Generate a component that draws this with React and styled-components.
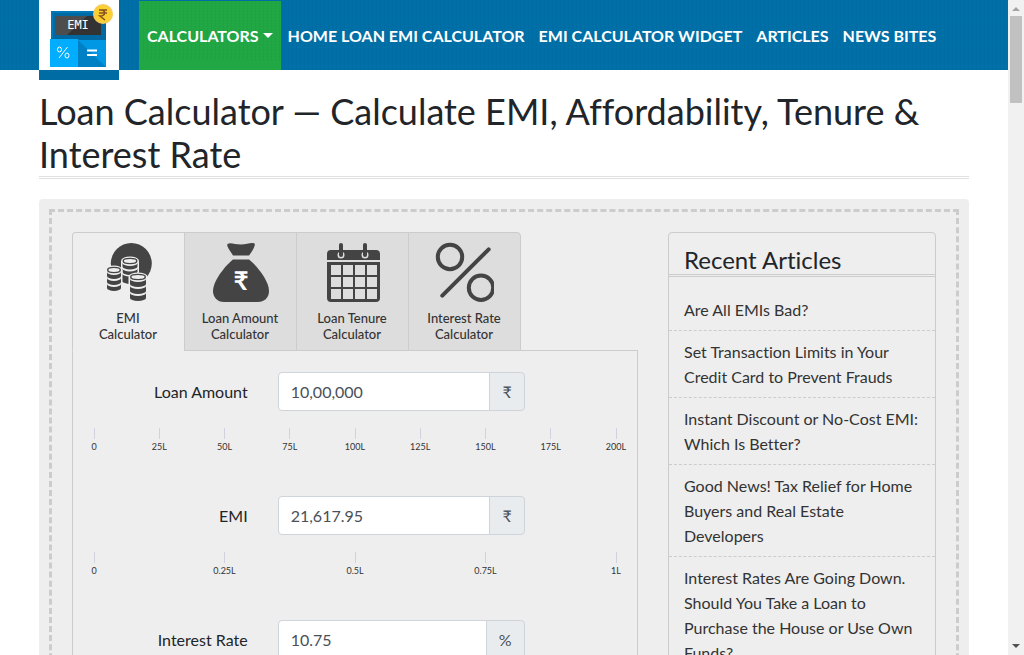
import React, { useState } from "react";
import styled, { createGlobalStyle, css } from "styled-components";

const GlobalStyle = createGlobalStyle`
  *, *::before, *::after { box-sizing: border-box; }
  body {
    margin: 0;
    background: #fff;
    color: #212529;
    font-family: Lato, "Noto Sans", sans-serif;
    font-size: 16px;
    font-variant-ligatures: none;
    line-height: 24px;
  }
  h1, h2, ul { margin: 0; padding: 0; font-weight: 400; }
  ul { list-style: none; }
  button, input { font: inherit; color: inherit; }
  a { color: inherit; text-decoration: none; }
`;

const weave = css`
  background-image:
    repeating-linear-gradient(90deg, rgba(0, 0, 0, 0.03) 0 1px, transparent 1px 4px),
    repeating-linear-gradient(0deg, rgba(0, 0, 0, 0.01) 0 1px, transparent 1px 3px);
`;

const Window = styled.div`
  display: flex;
  height: 100vh;
  overflow: hidden;
`;

const Page = styled.div`
  flex: 1;
  min-width: 0;
  overflow: hidden auto;
  scrollbar-width: none;
`;

const Container = styled.div`
  max-width: 960px;
  margin: 0 auto;
  padding: 0 15px;
`;

const Header = styled.header`
  height: 70px;
  background-color: #0070a9;
  ${weave}
`;

const HeaderInner = styled(Container)`
  display: flex;
  align-items: flex-start;
  gap: 20px;
`;

const LogoLink = styled.a`
  flex: none;
  width: 80px;
  height: 80px;
  background: #fff;
  border-bottom: 10px solid #006ca4;
  svg { display: block; }
`;

const Nav = styled.nav`
  display: flex;
  height: 70px;
  padding-top: 1px;
  text-transform: uppercase;
  font-weight: 700;
  color: #fff;
`;

const navItem = css`
  display: flex;
  align-items: center;
  white-space: nowrap;
`;

const NavLink = styled.a`
  ${navItem}
  padding: 0 7px;
`;

const NavMenuButton = styled.button`
  ${navItem}
  gap: 4px;
  padding: 0 8px;
  border: 0;
  background-color: #22a745;
  cursor: pointer;
  ${weave}
  background-size: 100% 59px;
  background-repeat: no-repeat;
`;

const Caret = styled.span`
  border: 5px solid transparent;
  border-top-color: #fff;
  border-bottom: 0;
`;

const Title = styled.h1`
  margin-top: 20px;
  border-bottom: 3px double #e0e0e0;
  font-size: 36px;
  line-height: 43px;
`;

const Board = styled.main`
  margin-top: 20px;
  padding: 10px;
  border-radius: 4px;
  background: #eee;
`;

const BoardFrame = styled.div`
  display: grid;
  grid-template-columns: 2fr 1fr;
  padding: 20px 5px;
  border: 3px dashed #ccc;
`;

const Column = styled.section`
  min-width: 0;
  padding: 0 15px;
`;

const Tabs = styled.div`
  position: relative;
  display: flex;
  margin-bottom: -1px;
`;

const Tab = styled.button`
  width: 113px;
  margin: 0 -1px 0 0;
  padding: 9px 9px 8px 8px;
  border: 1px solid #ccc;
  border-bottom-color: ${(p) => (p.$active ? "#eee" : "#ccc")};
  background: ${(p) => (p.$active ? "#eee" : "#ddd")};
  color: #333;
  font-size: 13px;
  font-weight: 500;
  line-height: 16px;
  text-align: center;
  cursor: pointer;
  &:first-child { border-top-left-radius: 4px; }
  &:last-child { border-top-right-radius: 4px; }
  svg { display: block; margin: 0 auto 8px; }
`;

const Form = styled.form`
  padding: 21px 5px 0;
  border: 1px solid #ccc;
`;

const Field = styled.div`
  height: 124px;
`;

const FieldRow = styled.div`
  display: grid;
  grid-template-columns: 4fr 6fr 2fr;
  align-items: center;
`;

const Label = styled.label`
  padding-right: 15px;
  text-align: right;
`;

const InputGroup = styled.div`
  display: flex;
  height: 39px;
  margin: 0 15px;
`;

const Input = styled.input`
  flex: 1;
  width: 0;
  padding: 6px 12px;
  border: 1px solid #ced4da;
  border-radius: 4px 0 0 4px;
  background: #fff;
  color: #495057;
  outline: 0;
`;

const Unit = styled.span`
  display: flex;
  align-items: center;
  margin-left: -1px;
  padding: 0 12px;
  border: 1px solid #ced4da;
  border-radius: 0 4px 4px 0;
  background: #e9ecef;
  color: #495057;
`;

const Scale = styled.div`
  display: flex;
  justify-content: space-between;
  margin: 17px 16px 0;
`;

const Mark = styled.span`
  display: flex;
  flex-direction: column;
  align-items: center;
  width: 0;
  font-size: 9px;
  line-height: 16px;
  color: #333;
  &::before {
    content: "";
    flex: none;
    width: 1px;
    height: 11px;
    background: #d2d2de;
  }
`;

const Sidebar = styled.div`
  border: 1px solid #ccc;
  border-radius: 4px;
`;

const SidebarTitle = styled.h2`
  padding: 12px 15px 0;
  border-bottom: 3px double #ccc;
  font-size: 24px;
  line-height: 29px;
`;

const ArticleList = styled.ul`
  padding-top: 12px;
`;

const Article = styled.li`
  padding: 8px 15px;
  border-bottom: 1px dashed #ccc;
  color: #333;
  line-height: 25px;
`;

const ScrollTrack = styled.div`
  display: flex;
  flex: none;
  flex-direction: column;
  align-items: center;
  justify-content: space-between;
  width: 16px;
  background: #f1f1f1;
  svg { display: block; }
`;

const ScrollThumb = styled.div`
  width: 12px;
  height: 87px;
  margin-bottom: auto;
  background: #c1c1c1;
`;

function Logo() {
  return (
    <svg width="80" height="70" viewBox="0 0 80 70" role="img" aria-label="EMI Calculator">
      <path d="M12 11H67V40H12z" fill="#0069a1" />
      <path d="M12 11H67V13H14V38H12z" fill="#0079b8" />
      <path d="M16 16H62V35H16z" fill="#4d4d4d" />
      <path d="M48 16H62V35H28z" fill="#333" />
      <path d="M11 39H39V67H11z" fill="#00adff" />
      <path d="M39 40H67V67H39z" fill="#0080c4" />
      <path d="M39 40H67V67z" fill="#0098e4" />
      <g fill="none" stroke="#fff">
        <ellipse cx="20.500" cy="49.500" rx="2" ry="2.500" />
        <ellipse cx="28" cy="55.500" rx="2" ry="2.500" />
        <path d="M28.500 47L20 58" />
        <path d="M48 50.500H58M48 55H58" strokeWidth="2" />
      </g>
      <text x="39" y="29" fill="#fff" fontSize="12" fontFamily="DejaVu Sans Mono, monospace" textAnchor="middle">EMI</text>
      <circle cx="64" cy="14" r="10" fill="#f7cb54" />
      <circle cx="64" cy="14" r="8" fill="#fbd02d" />
      <path d="M60 10H68M60 13H68M60 10H62C67 10 67 16 61 16L66 20" fill="none" stroke="#875122" strokeWidth="1.600" />
    </svg>
  );
}

function CoinStack({ x, y, width, rows, pitch }) {
  const r = width / 2;
  const ry = 3;
  const layers = Array.from({ length: rows }, (_, i) => y + ry + 2 + i * pitch);
  const bottom = layers[rows - 1] + pitch - 2;
  return (
    <g>
      <path
        d={`M${x} ${y + ry}A${r} ${ry} 0 0 1 ${x + width} ${y + ry}V${bottom}A${r} ${ry} 0 0 1 ${x} ${bottom}z`}
        fill="#eee" stroke="#eee" strokeWidth="3"
      />
      <ellipse cx={x + r} cy={y + ry} rx={r - 0.7} ry={ry - 0.4} fill="#eee" stroke="#444" strokeWidth="1.400" />
      {layers.map((top) => (
        <path
          key={top}
          d={`M${x} ${top}A${r} ${ry} 0 0 0 ${x + width} ${top}V${top + pitch - 2}A${r} ${ry} 0 0 1 ${x} ${top + pitch - 2}z`}
          fill="#444"
        />
      ))}
    </g>
  );
}

function CoinsIcon() {
  return (
    <svg width="60" height="60" viewBox="0 0 60 60" aria-hidden="true">
      <circle cx="33.300" cy="21.500" r="20.500" fill="#444" />
      <CoinStack x={24.5} y={16} width={15} rows={2} pitch={5.5} />
      <CoinStack x={9} y={25} width={14} rows={3} pitch={6} />
      <CoinStack x={32} y={32} width={16} rows={3} pitch={7} />
    </svg>
  );
}

function BagIcon() {
  return (
    <svg width="60" height="60" viewBox="0 0 60 60" aria-hidden="true">
      <path d="M17.500 2C20 0 25 2.500 31 2.500S41 0 44.500 1.500C46 3 42 10 39 13.500H23C21 10 16 4 17.500 2z" fill="#444" />
      <path d="M23 17.500H39C45 22 59 38 59 49C59 56 54 60 48 60H14C7 60 3 55 3 49C3 38 17 22 23 17.500z" fill="#444" />
      <text x="31" y="48" fill="#fff" fontSize="26" fontWeight="700" textAnchor="middle">₹</text>
    </svg>
  );
}

function CalendarIcon() {
  return (
    <svg width="60" height="60" viewBox="0 0 60 60" aria-hidden="true">
      <path d="M9 8H54Q58 8 58 12V18H5V12Q5 8 9 8zM5 20H58V56Q58 60 54 60H9Q5 60 5 56z" fill="#444" />
      {[19, 43].map((x) => (
        <g key={x}>
          <circle cx={x} cy="13" r="3.500" fill="#ddd" />
          <path d={`M${x} 3V13`} stroke="#444" strokeWidth="4" strokeLinecap="round" />
        </g>
      ))}
      {[23, 35, 47].map((y) =>
        [9, 21, 33, 45].map((x) => (
          <rect key={`${x}-${y}`} x={x} y={y} width="10" height="10" fill="#ddd" />
        ))
      )}
    </svg>
  );
}

function PercentIcon() {
  return (
    <svg width="60" height="60" viewBox="0 0 60 60" aria-hidden="true">
      <g fill="none" stroke="#444" strokeWidth="4" strokeLinecap="round">
        <circle cx="16" cy="15" r="12.200" />
        <circle cx="47" cy="45.700" r="12.200" />
        <path d="M54.700 7.300L8.300 53.700" />
      </g>
    </svg>
  );
}

const navLinks = ["Home Loan EMI Calculator", "EMI Calculator Widget", "Articles", "News Bites"];

const tabs = [
  { lines: ["EMI", "Calculator"], Icon: CoinsIcon },
  { lines: ["Loan Amount", "Calculator"], Icon: BagIcon },
  { lines: ["Loan Tenure", "Calculator"], Icon: CalendarIcon },
  { lines: ["Interest Rate", "Calculator"], Icon: PercentIcon },
];

const fields = [
  { id: "loanamount", label: "Loan Amount", value: "10,00,000", unit: "₹", marks: ["0", "25L", "50L", "75L", "100L", "125L", "150L", "175L", "200L"] },
  { id: "loanemi", label: "EMI", value: "21,617.95", unit: "₹", marks: ["0", "0.25L", "0.5L", "0.75L", "1L"] },
  { id: "loaninterest", label: "Interest Rate", value: "10.75", unit: "%", marks: [] },
];

const articles = [
  "Are All EMIs Bad?",
  "Set Transaction Limits in Your Credit Card to Prevent Frauds",
  "Instant Discount or No-Cost EMI: Which Is Better?",
  "Good News! Tax Relief for Home Buyers and Real Estate Developers",
  "Interest Rates Are Going Down. Should You Take a Loan to Purchase the House or Use Own Funds?",
];

export default function App() {
  const [active, setActive] = useState(0);
  return (
    <Window>
      <GlobalStyle />
      <Page>
        <Header>
          <HeaderInner>
            <LogoLink href="#home"><Logo /></LogoLink>
            <Nav>
              <NavMenuButton type="button" aria-haspopup="true">CALCULATORS<Caret /></NavMenuButton>
              {navLinks.map((text) => (
                <NavLink key={text} href="#nav">{text}</NavLink>
              ))}
            </Nav>
          </HeaderInner>
        </Header>
        <Container>
          <Title>Loan Calculator — Calculate EMI, Affordability, Tenure &amp; Interest Rate</Title>
          <Board>
            <BoardFrame>
              <Column>
                <Tabs role="tablist">
                  {tabs.map(({ lines, Icon }, i) => (
                    <Tab key={lines[0]} type="button" role="tab" aria-selected={i === active} $active={i === active} onClick={() => setActive(i)}>
                      <Icon />
                      {lines[0]}<br />{lines[1]}
                    </Tab>
                  ))}
                </Tabs>
                <Form>
                  {fields.map((f) => (
                    <Field key={f.id}>
                      <FieldRow>
                        <Label htmlFor={f.id}>{f.label}</Label>
                        <InputGroup>
                          <Input id={f.id} type="text" defaultValue={f.value} />
                          <Unit>{f.unit}</Unit>
                        </InputGroup>
                      </FieldRow>
                      <Scale>
                        {f.marks.map((m) => <Mark key={m}>{m}</Mark>)}
                      </Scale>
                    </Field>
                  ))}
                </Form>
              </Column>
              <Column>
                <Sidebar>
                  <SidebarTitle>Recent Articles</SidebarTitle>
                  <ArticleList>
                    {articles.map((text) => (
                      <Article key={text}><a href="#article">{text}</a></Article>
                    ))}
                  </ArticleList>
                </Sidebar>
              </Column>
            </BoardFrame>
          </Board>
        </Container>
      </Page>
      <ScrollTrack aria-hidden="true">
        <svg width="16" height="16"><path d="M4 11L8 7L12 11z" fill="#a3a3a3" /></svg>
        <ScrollThumb />
        <svg width="16" height="16"><path d="M4 5L8 9L12 5z" fill="#505050" /></svg>
      </ScrollTrack>
    </Window>
  );
}
